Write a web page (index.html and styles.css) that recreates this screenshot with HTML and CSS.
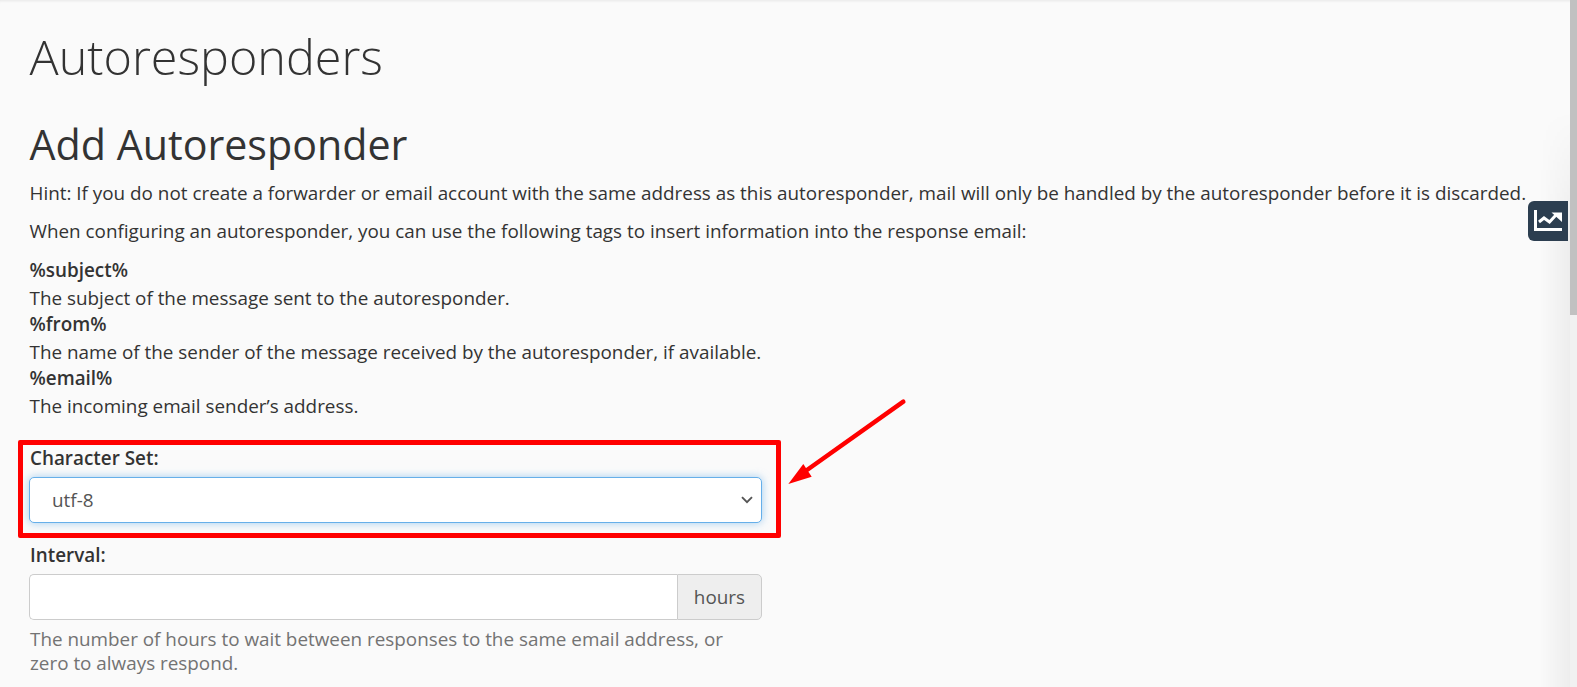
FILE: index.html
```html
<!DOCTYPE html>
<html lang="en">
<head>
  <meta charset="UTF-8" />
  <meta name="viewport" content="width=device-width, initial-scale=1" />
  <title>Autoresponders</title>
  <link rel="stylesheet" href="styles.css">
</head>
<body>
  <div class="page">
    <main class="content">
      <h1>Autoresponders</h1>
      <h2>Add Autoresponder</h2>
      <p class="hint">Hint: If you do not create a forwarder or email account with the same address as this autoresponder, mail will only be handled by the autoresponder before it is discarded.</p>
      <p class="hint">When configuring an autoresponder, you can use the following tags to insert information into the response email:</p>

      <dl class="tags">
        <dt>%subject%</dt>
        <dd>The subject of the message sent to the autoresponder.</dd>
        <dt>%from%</dt>
        <dd>The name of the sender of the message received by the autoresponder, if available.</dd>
        <dt>%email%</dt>
        <dd>The incoming email sender’s address.</dd>
      </dl>

      <form class="form">
        <div class="field">
          <label for="charset">Character Set:</label>
          <div class="select-box" id="charset">
            <span>utf-8</span>
            <svg class="chevron" width="12" height="8" viewBox="0 0 12 8"><path d="M1 1.200 6 6.200 11 1.200" fill="none" stroke="#555" stroke-width="1.900"/></svg>
          </div>
        </div>
        <div class="field">
          <label for="interval">Interval:</label>
          <div class="input-group">
            <input type="text" id="interval">
            <span class="addon">hours</span>
          </div>
          <p class="help">The number of hours to wait between responses to the same email address, or zero to always respond.</p>
        </div>
      </form>
    </main>

    <div class="edge-shade"></div>

    <!-- stats tab -->
    <div class="side-tab">
      <svg width="30" height="24" viewBox="0 0 30 24">
        <path d="M2.500 1v19.500H29" fill="none" stroke="#fff" stroke-width="3"/>
        <path d="M6 13l5-4 5.500 4L23 6" fill="none" stroke="#fff" stroke-width="3"/>
        <path d="M18.500 3.500H29V13z" fill="#fff"/>
      </svg>
    </div>

    <!-- annotation drawn on the screenshot -->
    <div class="mark-box"></div>
    <svg class="mark-arrow" width="130" height="100" viewBox="0 0 130 100">
      <path d="M116.300 5.700 20 74" fill="none" stroke="#f00" stroke-width="4.500" stroke-linecap="round"/>
      <path d="M1.300 88 16.300 68 24.700 80.700z" fill="#f00"/>
    </svg>

    <div class="scrollbar"><div class="thumb"></div></div>
  </div>
</body>
</html>
```

FILE: styles.css
```css
* {
  margin: 0;
  padding: 0;
  box-sizing: border-box;
}
body {
  font-family: "Open Sans", Arial, sans-serif;
  font-size: 18.87px;
  line-height: 27px;
  color: #333;
  background: #fafafa;
}
.page {
  position: relative;
  height: 687px;
  overflow: hidden;
  box-shadow: inset 0 3px 3px -2px rgba(0, 0, 0, 0.08);
}
.content {
  padding: 22px 0 0 29.500px;
}
h1 {
  font-size: 48.500px;
  font-weight: 300;
  line-height: 68px;
  margin-bottom: 25px;
}
h2 {
  font-size: 41.200px;
  font-weight: 500;
  line-height: 58px;
  margin-bottom: 7px;
}
.hint {
  margin-bottom: 11px;
}
.tags {
  margin-top: 12px;
  margin-bottom: 26px;
  width: 760px;
}
.tags dt {
  font-weight: 600;
}
.tags dd {
  padding-top: 1px;
  line-height: 26px;
}
.form {
  width: 733px;
  margin-left: -0.500px;
}
.field {
  margin-bottom: 19px;
}
label {
  display: block;
  padding-left: 1px;
  font-weight: 600;
  margin-bottom: 5px;
}
.select-box {
  display: flex;
  align-items: center;
  justify-content: space-between;
  height: 46px;
  padding: 0 8px 0 22px;
  background: #fff;
  border: 1px solid #66afe9;
  border-radius: 5px;
  box-shadow: 0 0 8px rgba(102, 175, 233, 0.6);
  color: #555;
}
.input-group {
  display: flex;
  height: 46px;
}
.input-group input {
  flex: 1;
  min-width: 0;
  background: #fff;
  border: 1px solid #ccc;
  border-right: 0;
  border-radius: 5px 0 0 5px;
}
.addon {
  display: flex;
  align-items: center;
  padding: 0 16px;
  background: #eee;
  border: 1px solid #ccc;
  border-radius: 0 5px 5px 0;
  color: #555;
}
.help {
  margin-top: 7px;
  padding-left: 1px;
  line-height: 24px;
  color: #737373;
}
/* soft shade along the right edge */
.edge-shade {
  position: absolute;
  top: 110px;
  bottom: 0;
  right: 7px;
  width: 30px;
  background: linear-gradient(to right, rgba(0, 0, 0, 0), rgba(0, 0, 0, 0.05));
  -webkit-mask-image: linear-gradient(to bottom, transparent, #000 120px);
  mask-image: linear-gradient(to bottom, transparent, #000 120px);
}
.side-tab {
  position: absolute;
  top: 201px;
  left: 1528px;
  width: 40px;
  height: 40px;
  display: flex;
  align-items: center;
  justify-content: center;
  background: #2c3e50;
  border-radius: 6px 0 0 6px;
}
.mark-box {
  position: absolute;
  top: 440px;
  left: 18px;
  width: 763px;
  height: 98px;
  border: 5px solid #f00;
  border-radius: 2px;
}
.mark-arrow {
  position: absolute;
  top: 396px;
  left: 787px;
}
.scrollbar {
  position: absolute;
  top: 0;
  right: 0;
  width: 7px;
  height: 687px;
  background: #f1f1f1;
}
.thumb {
  height: 315px;
  background: #c1c1c1;
}
```
